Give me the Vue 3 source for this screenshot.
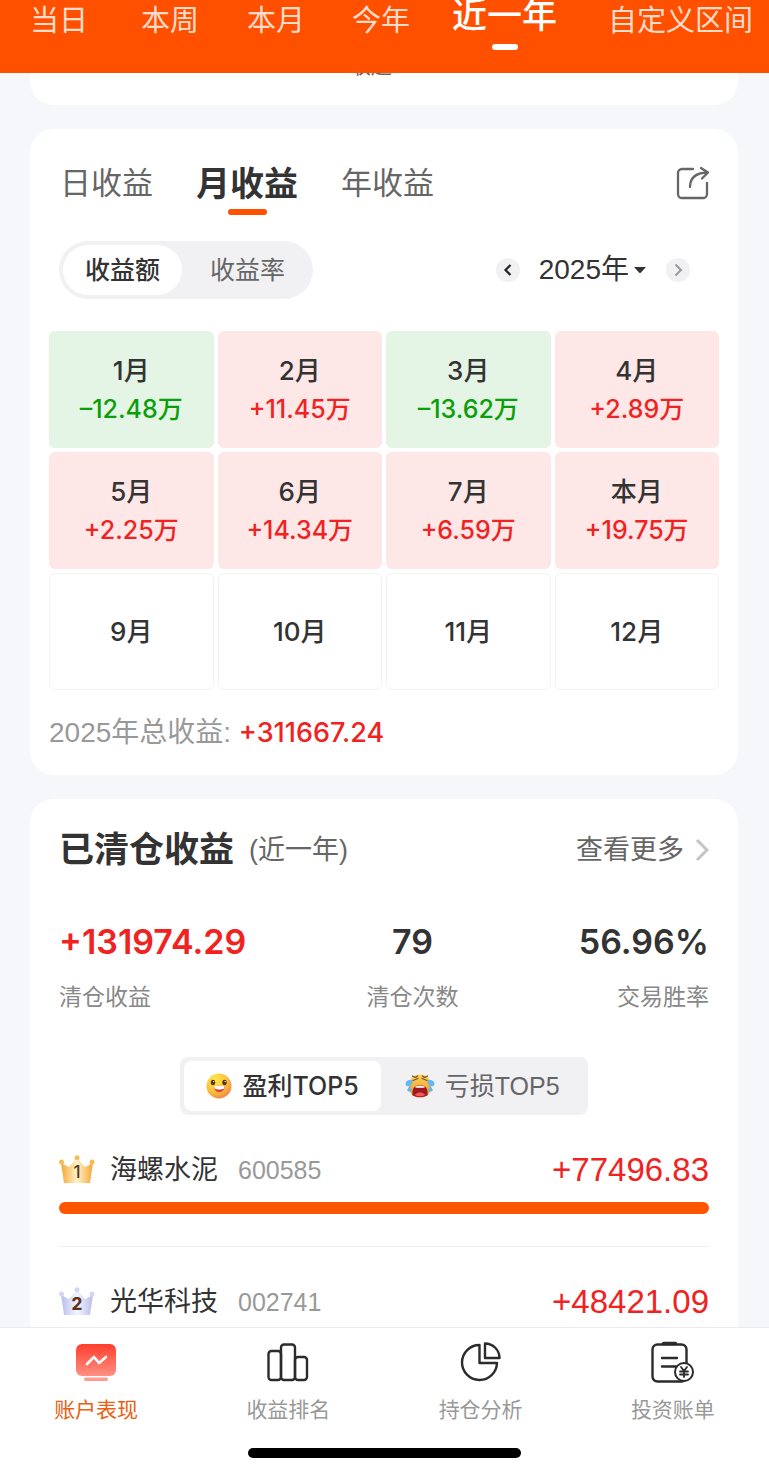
<script setup>
import { ref } from 'vue'

const ranges = ['当日', '本周', '本月', '今年', '近一年', '自定义区间']
const range = ref('近一年')

const periods = ['日收益', '月收益', '年收益']
const period = ref('月收益')

const modes = ['收益额', '收益率']
const mode = ref('收益额')

const months = [
  { name: '1月', value: '–12.48万', kind: 'loss' },
  { name: '2月', value: '+11.45万', kind: 'gain' },
  { name: '3月', value: '–13.62万', kind: 'loss' },
  { name: '4月', value: '+2.89万', kind: 'gain' },
  { name: '5月', value: '+2.25万', kind: 'gain' },
  { name: '6月', value: '+14.34万', kind: 'gain' },
  { name: '7月', value: '+6.59万', kind: 'gain' },
  { name: '本月', value: '+19.75万', kind: 'gain' },
  { name: '9月', kind: 'empty' },
  { name: '10月', kind: 'empty' },
  { name: '11月', kind: 'empty' },
  { name: '12月', kind: 'empty' },
]

const board = ref('profit')

const stocks = [
  { rank: 1, name: '海螺水泥', code: '600585', amount: '+77496.83', share: 100 },
  { rank: 2, name: '光华科技', code: '002741', amount: '+48421.09', share: 62 },
]
</script>

<template>
  <div class="page">
    <header class="topbar">
      <nav class="ranges">
        <button
          v-for="r in ranges"
          :key="r"
          type="button"
          class="range"
          :class="{ active: r === range }"
          @click="range = r"
        >{{ r }}</button>
      </nav>
    </header>

    <main class="content">
      <section class="card folded">
        <button type="button" class="fold">
          收起
          <svg width="20" height="12" viewBox="0 0 20 12" fill="none" stroke="#999" stroke-width="2"><path d="M4 9l6-6 6 6" /></svg>
        </button>
      </section>

      <section class="card calendar">
        <div class="periods">
          <button
            v-for="p in periods"
            :key="p"
            type="button"
            class="period"
            :class="{ active: p === period }"
            @click="period = p"
          >{{ p }}</button>
          <button type="button" class="share" aria-label="分享">
            <svg width="34" height="34" viewBox="0 0 34 34" fill="none" stroke="#666" stroke-width="2.300" stroke-linecap="round" stroke-linejoin="round">
              <path d="M17 3H6a4 4 0 0 0-4 4v21a4 4 0 0 0 4 4h21a4 4 0 0 0 4-4V17" />
              <path d="M14 21C14 12 19 7 31 6.500M25 2l7 4.500-6 6" />
            </svg>
          </button>
        </div>

        <div class="filters">
          <div class="modes">
            <button
              v-for="m in modes"
              :key="m"
              type="button"
              class="mode"
              :class="{ active: m === mode }"
              @click="mode = m"
            >{{ m }}</button>
          </div>
          <div class="year">
            <button type="button" class="step" aria-label="上一年">
              <svg width="24" height="24" viewBox="0 0 24 24" fill="none" stroke="#222" stroke-width="2.200"><path d="M14.500 7l-5 5 5 5" /></svg>
            </button>
            <button type="button" class="pick">
              2025年
              <svg width="14" height="8" viewBox="0 0 14 8" fill="#333"><path d="M1 1h12L8 6.500q-1 1-2 0z" /></svg>
            </button>
            <button type="button" class="step" aria-label="下一年">
              <svg width="24" height="24" viewBox="0 0 24 24" fill="none" stroke="#999" stroke-width="2"><path d="M9.500 6.500l5.500 5.500-5.500 5.500" /></svg>
            </button>
          </div>
        </div>

        <div class="months">
          <div v-for="m in months" :key="m.name" class="month" :class="m.kind">
            <span class="month-name">{{ m.name }}</span>
            <span v-if="m.value" class="month-value">{{ m.value }}</span>
          </div>
        </div>

        <p class="total">2025年总收益: <strong>+311667.24</strong></p>
      </section>

      <section class="card closed">
        <div class="closed-head">
          <h2>已清仓收益</h2>
          <span class="scope">(近一年)</span>
          <a href="#" class="more">
            查看更多
            <svg width="14" height="24" viewBox="0 0 14 24" fill="none" stroke="#c4c4c4" stroke-width="3"><path d="M2 2l10 10L2 22" /></svg>
          </a>
        </div>

        <dl class="stats">
          <div class="stat">
            <dd class="red">+131974.29</dd>
            <dt>清仓收益</dt>
          </div>
          <div class="stat middle">
            <dd>79</dd>
            <dt>清仓次数</dt>
          </div>
          <div class="stat last">
            <dd>56.96%</dd>
            <dt>交易胜率</dt>
          </div>
        </dl>

        <div class="boards">
          <button type="button" class="board" :class="{ active: board === 'profit' }" @click="board = 'profit'">
            <svg width="26" height="26" viewBox="0 0 26 26">
              <defs>
                <radialGradient id="smile" cx="0.35" cy="0.25" r="0.85">
                  <stop offset="0" stop-color="#ffe84a" />
                  <stop offset="0.550" stop-color="#fcc23c" />
                  <stop offset="1" stop-color="#ef7a4c" />
                </radialGradient>
              </defs>
              <circle cx="13" cy="13" r="12.500" fill="url(#smile)" />
              <ellipse cx="7" cy="9.500" rx="2.200" ry="2.800" fill="#5a3219" />
              <ellipse cx="18.500" cy="9.500" rx="2.200" ry="2.800" fill="#5a3219" />
              <circle cx="7.600" cy="8.600" r="0.700" fill="#fff" />
              <circle cx="19.100" cy="8.600" r="0.700" fill="#fff" />
              <path d="M8 13h10.500c0 4-2 6-5.200 6S8 17 8 13z" fill="#d94b32" />
              <path d="M8 13h10.500l-.7 2.800q-4.500 1.200-9 0z" fill="#fff" />
            </svg>
            盈利TOP5
          </button>
          <button type="button" class="board" :class="{ active: board === 'loss' }" @click="board = 'loss'">
            <svg width="30" height="26" viewBox="0 0 30 26">
              <defs>
                <linearGradient id="cry" x1="0" y1="0" x2="0" y2="1">
                  <stop offset="0" stop-color="#ffd84c" />
                  <stop offset="1" stop-color="#ee8a35" />
                </linearGradient>
              </defs>
              <circle cx="15" cy="13" r="11.500" fill="url(#cry)" />
              <path d="M7.500 3q3 2.500 5 0M22.500 3q-3 2.500-5 0M8 7.500l5-2M22 7.500l-5-2" fill="none" stroke="#7b5138" stroke-width="1.300" stroke-linecap="round" />
              <path d="M7.500 22.500C7 15 9 12.500 15 12.500s8 2.500 7.500 10q-7.500 3-15 0z" fill="#a0191f" />
              <path d="M10.500 13.500q4.500-1.500 9 0v1.300h-9z" fill="#fff" />
              <path d="M9.500 22q5.500-5.500 11 0-5.500 2.500-11 0z" fill="#ef5b5b" />
              <path d="M8.500 8C4 5.500.5 8 .5 11s4.500 3 6 0zM5.500 12.500L2 17q1.500 3 4.500 1zM21.500 8c4.500-2.500 8 0 8 3s-4.500 3-6 0zM24.500 12.500L28 17q-1.500 3-4.500 1z" fill="#5fb8ee" />
            </svg>
            亏损TOP5
          </button>
        </div>

        <ul class="stocks">
          <li v-for="s in stocks" :key="s.rank" class="stock">
            <div class="stock-line">
              <svg class="crown" width="36" height="30" viewBox="0 0 36 30">
                <defs>
                  <linearGradient id="crown1">
                    <stop offset="0" stop-color="#f5a733" />
                    <stop offset="0.500" stop-color="#fff3cd" />
                    <stop offset="1" stop-color="#f5a733" />
                  </linearGradient>
                  <linearGradient id="crown2">
                    <stop offset="0" stop-color="#b9bdea" />
                    <stop offset="0.500" stop-color="#f4f5ff" />
                    <stop offset="1" stop-color="#b9bdea" />
                  </linearGradient>
                </defs>
                <path d="M2 8l8 4 8-9 8 9 8-4-3 20H5z" :fill="`url(#crown${s.rank})`" />
                <g :fill="s.rank === 1 ? '#f7bd58' : '#d3d6f5'">
                  <circle cx="2.500" cy="7" r="2.500" />
                  <circle cx="18" cy="2.800" r="2.500" />
                  <circle cx="33" cy="7" r="2.500" />
                </g>
                <text x="18" y="23" text-anchor="middle" class="rank" :class="{ bold: s.rank > 1 }">{{ s.rank }}</text>
              </svg>
              <span class="stock-name">{{ s.name }}</span>
              <span class="stock-code">{{ s.code }}</span>
              <span class="stock-amount">{{ s.amount }}</span>
            </div>
            <div class="bar" :style="{ width: s.share + '%' }"></div>
          </li>
        </ul>
      </section>
    </main>

    <footer class="tabbar">
      <nav class="tabs">
        <a href="#" class="tab current">
          <svg width="44" height="44" viewBox="0 0 44 44">
            <defs>
              <linearGradient id="screen" x1="0" y1="0" x2="0" y2="1">
                <stop offset="0" stop-color="#ff3d2b" />
                <stop offset="1" stop-color="#ff9184" />
              </linearGradient>
            </defs>
            <rect x="2" y="3" width="40" height="32" rx="6" fill="url(#screen)" />
            <rect x="10" y="36.500" width="24" height="3.500" rx="1.700" fill="#ff9a8e" />
            <path d="M13 23l7-7 5 6 7-6" fill="none" stroke="#fff" stroke-width="2.600" stroke-linecap="round" stroke-linejoin="round" />
          </svg>
          账户表现
        </a>
        <a href="#" class="tab">
          <svg width="44" height="44" viewBox="0 0 44 44" fill="none" stroke="#2b2b2b" stroke-width="2.400">
            <rect x="2.500" y="10" width="12.500" height="29" rx="3" />
            <rect x="15" y="3.500" width="14" height="35.500" rx="3" />
            <rect x="29" y="16" width="12" height="23" rx="3" />
          </svg>
          收益排名
        </a>
        <a href="#" class="tab">
          <svg width="44" height="44" viewBox="0 0 44 44" fill="none" stroke="#2b2b2b" stroke-width="2.400" stroke-linejoin="round">
            <path d="M20.500 4A17.500 17.500 0 1 0 38 22H20.500z" />
            <path d="M26 2.500V17h14.500C40.500 9 34 2.500 26 2.500z" />
          </svg>
          持仓分析
        </a>
        <a href="#" class="tab">
          <svg width="44" height="44" viewBox="0 0 44 44" fill="none" stroke="#2b2b2b" stroke-width="2.400" stroke-linecap="round">
            <rect x="1.500" y="3.500" width="34" height="37" rx="5" />
            <path d="M12.500 2.500h12" stroke-width="3.400" />
            <path d="M11 17h15M11 25.500h14" />
            <circle cx="33" cy="31" r="9" fill="#fff" stroke-width="2" />
            <path d="M30 26l3 4 3-4M33 30v6M29 30.500h8M29 33.500h8" stroke-width="1.800" />
          </svg>
          投资账单
        </a>
      </nav>
      <div class="home"></div>
    </footer>
  </div>
</template>

<style>
body {
  background: #f6f7fa;
}
</style>

<style scoped>
.page {
  display: flex;
  flex-direction: column;
  height: 100vh;
  overflow: hidden;
  background: #f6f7fa;
  color: #333;
  font-family: "Liberation Sans", "Noto Sans CJK SC", sans-serif;
}
button {
  border: 0;
  padding: 0;
  margin: 0;
  background: none;
  color: inherit;
  font: inherit;
  white-space: nowrap;
  cursor: pointer;
}
a {
  color: inherit;
  text-decoration: none;
}
svg {
  display: block;
  flex: none;
}

.topbar {
  flex: none;
  height: 73px;
  background: #ff5000;
}
.ranges {
  display: grid;
  grid-template-columns: 111fr 106fr 105fr 100fr 156fr 146fr;
  justify-items: start;
  align-items: start;
  padding: 0 15px 0 30px;
}
.range {
  color: #ffdccb;
  font-size: 29px;
  line-height: 42px;
}
.range.active {
  display: flex;
  flex-direction: column;
  align-items: center;
  gap: 12px;
  color: #fff;
  font-size: 35px;
  font-weight: 500;
  line-height: 32px;
}
.range.active::after {
  content: "";
  width: 26px;
  height: 6px;
  border-radius: 3px;
  background: #fff;
}

.content {
  flex: 1;
  min-height: 0;
  overflow: hidden;
  padding: 0 31px 0 30px;
  display: flex;
  flex-direction: column;
  gap: 24px;
}
.card {
  flex: none;
  border-radius: 24px;
  background: #fff;
}
.folded {
  margin-top: -22px;
  padding-bottom: 24px;
}
.fold {
  display: flex;
  align-items: center;
  justify-content: center;
  gap: 6px;
  width: 100%;
  color: #666;
  font-size: 21px;
  line-height: 30px;
}

.calendar {
  padding: 30px 19px 22px;
}
.periods {
  display: flex;
  align-items: flex-start;
  gap: 43px;
  padding: 0 9px 0 11px;
}
.period {
  color: #666;
  font-size: 31px;
  line-height: 50px;
}
.period.active {
  display: flex;
  flex-direction: column;
  align-items: center;
  color: #333;
  font-size: 34px;
  font-weight: 700;
}
.period.active::after {
  content: "";
  width: 39px;
  height: 6px;
  border-radius: 3px;
  background: #ff5000;
}
.share {
  margin-left: auto;
  padding-top: 7px;
}
.filters {
  display: flex;
  align-items: center;
  justify-content: space-between;
  margin-top: 26px;
  padding: 0 29px 0 10px;
}
.modes {
  display: flex;
  padding: 4px;
  border-radius: 29px;
  background: #f1f1f4;
}
.mode {
  padding: 0 22px;
  border-radius: 25px;
  color: #666;
  font-size: 25px;
  line-height: 50px;
}
.mode + .mode {
  padding: 0 24px 0 28px;
}
.mode.active {
  background: #fff;
  color: #333;
  font-weight: 500;
}
.year {
  display: flex;
  align-items: center;
  gap: 19px;
}
.step {
  border-radius: 50%;
  background: #f1f1f4;
}
.pick {
  display: flex;
  align-items: center;
  gap: 4px;
  font-size: 28px;
  line-height: 36px;
}
.months {
  display: grid;
  grid-template-columns: repeat(4, 1fr);
  gap: 4px;
  margin-top: 32px;
}
.month {
  display: flex;
  flex-direction: column;
  align-items: center;
  justify-content: center;
  box-sizing: border-box;
  min-height: 117px;
  border-radius: 6px;
  font-family: Inter, "Noto Sans CJK SC", sans-serif;
  font-size: 26px;
  font-weight: 500;
  line-height: 38px;
}
.month-value {
  font-size: 25px;
}
.gain {
  background: #fde7e7;
}
.gain .month-value {
  color: #f02222;
}
.loss {
  background: #e4f4e5;
}
.loss .month-value {
  color: #0a9f0a;
}
.empty {
  border: 1px solid #f3f3f5;
}
.total {
  margin: 23px 0 0;
  color: #999;
  font-size: 28px;
  line-height: 40px;
}
.total strong {
  color: #f02222;
  font-family: Inter, sans-serif;
  font-size: 27px;
  font-weight: 500;
}

.closed {
  padding: 26px 29px 0;
}
.closed-head {
  display: flex;
  align-items: center;
  line-height: 50px;
}
h2 {
  margin: 0;
  font-size: 35px;
  font-weight: 700;
}
.scope {
  margin-left: 15px;
  color: #666;
  font-size: 27px;
}
.more {
  display: flex;
  align-items: center;
  gap: 11px;
  margin-left: auto;
  color: #666;
  font-size: 27px;
}
.stats {
  display: flex;
  justify-content: space-between;
  margin: 42px 0 0;
}
.stat dd {
  margin: 0;
  font-family: Inter, sans-serif;
  font-size: 34px;
  font-weight: 600;
  line-height: 50px;
}
.stat dt {
  margin-top: 12px;
  color: #888;
  font-size: 23px;
  line-height: 36px;
}
.stat .red {
  color: #f02222;
}
.middle {
  text-align: center;
}
.last {
  text-align: right;
}
.boards {
  display: flex;
  width: fit-content;
  margin: 42px auto 0;
  padding: 4px;
  border-radius: 8px;
  background: #f1f1f4;
}
.board {
  display: flex;
  align-items: center;
  gap: 10px;
  padding: 0 24px;
  border-radius: 8px;
  color: #666;
  font-size: 25px;
  line-height: 50px;
}
.board.active {
  padding: 0 22px;
  background: #fff;
  color: #333;
  font-family: Inter, "Noto Sans CJK SC", sans-serif;
  font-weight: 500;
}
.stocks {
  list-style: none;
  margin: 0;
  padding: 0;
}
.stock {
  padding: 35px 0 32px;
  border-bottom: 1px solid #eee;
}
.stock-line {
  display: flex;
  align-items: center;
  line-height: 40px;
}
.rank {
  fill: #5b3420;
  font-family: Inter, sans-serif;
  font-size: 17px;
  font-weight: 500;
}
.rank.bold {
  font-weight: 800;
}
.stock-name {
  margin-left: 15px;
  font-size: 27px;
}
.stock-code {
  margin-left: 20px;
  color: #999;
  font-size: 25px;
}
.stock-amount {
  margin-left: auto;
  color: #f02222;
  font-size: 33px;
}
.bar {
  height: 12px;
  margin-top: 12px;
  border-radius: 6px;
  background: #ff5500;
}

.tabbar {
  flex: none;
  border-top: 1px solid #ebebee;
  background: #fff;
  padding: 13px 0 17px;
}
.tabs {
  display: grid;
  grid-template-columns: repeat(4, 1fr);
}
.tab {
  display: flex;
  flex-direction: column;
  align-items: center;
  gap: 10px;
  color: #999;
  font-size: 21px;
  line-height: 30px;
}
.tab.current {
  color: #ec6011;
}
.home {
  width: 273px;
  height: 10px;
  margin: 23px auto 0;
  border-radius: 5px;
  background: #000;
}
</style>
